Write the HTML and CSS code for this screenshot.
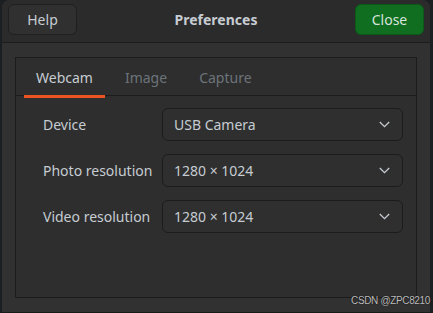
FILE: index.html
```html
<!DOCTYPE html>
<html>
<head>
<meta charset="utf-8">
<link rel="stylesheet" href="styles.css">
</head>
<body>
<div class="window">
  <header class="headerbar">
    <button class="btn">Help</button>
    <div class="title">Preferences</div>
    <button class="btn btn-green">Close</button>
  </header>
  <main class="content">
    <section class="notebook">
      <nav class="tabs">
        <div class="tab active">Webcam</div>
        <div class="tab">Image</div>
        <div class="tab">Capture</div>
      </nav>
      <div class="page">
        <div class="label">Device</div>
        <div class="combo"><span>USB Camera</span><svg class="chev" width="11" height="7" viewBox="0 0 11 7"><polyline points="0.8,1 5.5,5.6 10.2,1" fill="none" stroke="#c6ccd2" stroke-width="1.3"/></svg></div>
        <div class="label">Photo resolution</div>
        <div class="combo"><span>1280 × 1024</span><svg class="chev" width="11" height="7" viewBox="0 0 11 7"><polyline points="0.8,1 5.5,5.6 10.2,1" fill="none" stroke="#c6ccd2" stroke-width="1.3"/></svg></div>
        <div class="label">Video resolution</div>
        <div class="combo"><span>1280 × 1024</span><svg class="chev" width="11" height="7" viewBox="0 0 11 7"><polyline points="0.8,1 5.5,5.6 10.2,1" fill="none" stroke="#c6ccd2" stroke-width="1.3"/></svg></div>
      </div>
    </section>
  </main>
  <div class="watermark">CSDN @ZPC8210</div>
</div>
</body>
</html>
```
FILE: styles.css
```css
html, body {
  margin: 0;
  padding: 0;
  background: #1b1f22;
  height: 313px;
  overflow: hidden;
}
.window {
  position: relative;
  margin-left: 2px;
  width: 428px;
  height: 312px;
  background: #313131;
  border-radius: 8px 8px 0 0;
  font-family: "Noto Sans", sans-serif;
  font-size: 14px;
  color: #c6ccd2;
  display: flex;
  flex-direction: column;
  border-bottom: 1px solid #1a1a1a;
}
.headerbar {
  height: 43px;
  box-sizing: border-box;
  padding: 4px 6px 0 6px;
  background: #2b2b2b;
  border-bottom: 1px solid #1c1c1c;
  border-radius: 8px 8px 0 0;
  display: flex;
  justify-content: space-between;
  align-items: flex-start;
  flex: none;
}
.btn {
  width: 69px;
  height: 31px;
  border-radius: 6px;
  border: 1px solid #1f1f1f;
  background: #303030;
  color: #c6ccd2;
  font-family: "Noto Sans", sans-serif;
  font-size: 14px;
  padding: 0;
}
.btn-green {
  background: #0f6e1f;
  border-color: #0b5a18;
  color: #d6e2da;
}
.title {
  font-weight: bold;
  font-size: 14px;
  line-height: 31px;
  color: #c6ccd2;
}
.content {
  flex: 1;
  padding: 14px 13px 14px 13px;
  display: flex;
}
.notebook {
  flex: 1;
  border: 1px solid #1c1c1c;
  background: #2e2e2e;
  display: flex;
  flex-direction: column;
}
.tabs {
  height: 38px;
  box-sizing: border-box;
  padding-left: 8px;
  display: flex;
  gap: 8px;
  border-bottom: 1px solid #1c1c1c;
}
.tab {
  padding: 2px 12px 0 12px;
  line-height: 35px;
  height: 35px;
  color: #6c747a;
  border-bottom: 3px solid transparent;
  margin-bottom: -1px;
}
.tab.active {
  color: #c6ccd2;
  border-bottom-color: #e95420;
}
.page {
  padding: 12px 13px 0 27px;
  display: grid;
  grid-template-columns: 113px 1fr;
  column-gap: 6px;
  row-gap: 13px;
  align-items: center;
}
.combo {
  height: 33px;
  box-sizing: border-box;
  border: 1px solid #1c1c1c;
  border-radius: 6px;
  background: #2f2f2f;
  display: flex;
  align-items: center;
  justify-content: space-between;
  padding: 0 12px 0 11px;
}
.chev {
  display: block;
}
.watermark {
  position: absolute;
  right: 0;
  bottom: 6px;
  font-family: "Liberation Sans", Arial, sans-serif;
  font-size: 10px;
  letter-spacing: -0.35px;
  color: #bdbdbd;
  text-shadow: 0 0 1px #000;
}
```
